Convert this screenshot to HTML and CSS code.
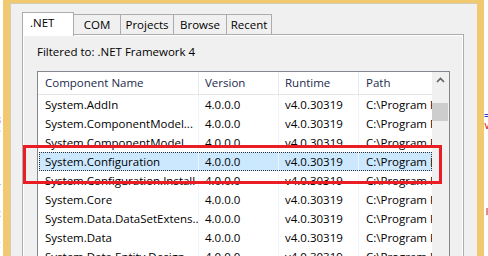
FILE: index.html
```html
<!DOCTYPE html>
<html>
<head>
<meta charset="utf-8">
<link rel="stylesheet" href="styles.css">
</head>
<body>
<div class="screen">
  <div class="gutter gutter-left">
    <span class="frag red" style="top:117px">8</span>
    <span class="frag blue" style="top:126px">s</span>
    <span class="frag blue" style="top:178px">i</span>
    <span class="frag blue" style="top:210px">c</span>
    <span class="frag red" style="top:241px">t</span>
  </div>
  <div class="window">
    <div class="window-inner">
      <div class="tabs">
        <div class="tabstrip">
          <div class="tab active w-net">.NET</div>
          <div class="tab w-com">COM</div>
          <div class="tab w-projects">Projects</div>
          <div class="tab w-browse">Browse</div>
          <div class="tab w-recent">Recent</div>
        </div>
        <div class="page">
          <div class="filter">Filtered to: .NET Framework 4</div>
          <div class="listview">
            <div class="lv-main">
              <div class="lv-header">
                <div class="cell c1">Component Name</div>
                <div class="cell c2">Version</div>
                <div class="cell c3">Runtime</div>
                <div class="cell c4">Path</div>
              </div>
              <div class="lv-rows">
                <div class="row"><div class="cell c1">System.AddIn</div><div class="cell c2">4.0.0.0</div><div class="cell c3">v4.0.30319</div><div class="cell c4">C:\Program Files</div></div>
                <div class="row"><div class="cell c1">System.ComponentModel...</div><div class="cell c2">4.0.0.0</div><div class="cell c3">v4.0.30319</div><div class="cell c4">C:\Program Files</div></div>
                <div class="row"><div class="cell c1">System.ComponentModel...</div><div class="cell c2">4.0.0.0</div><div class="cell c3">v4.0.30319</div><div class="cell c4">C:\Program Files</div></div>
                <div class="row selected"><div class="cell c1">System.Configuration</div><div class="cell c2">4.0.0.0</div><div class="cell c3">v4.0.30319</div><div class="cell c4">C:\Program Files</div></div>
                <div class="row"><div class="cell c1">System.Configuration.Install</div><div class="cell c2">4.0.0.0</div><div class="cell c3">v4.0.30319</div><div class="cell c4">C:\Program Files</div></div>
                <div class="row"><div class="cell c1">System.Core</div><div class="cell c2">4.0.0.0</div><div class="cell c3">v4.0.30319</div><div class="cell c4">C:\Program Files</div></div>
                <div class="row"><div class="cell c1">System.Data.DataSetExtens...</div><div class="cell c2">4.0.0.0</div><div class="cell c3">v4.0.30319</div><div class="cell c4">C:\Program Files</div></div>
                <div class="row"><div class="cell c1">System.Data</div><div class="cell c2">4.0.0.0</div><div class="cell c3">v4.0.30319</div><div class="cell c4">C:\Program Files</div></div>
                <div class="row"><div class="cell c1">System.Data.Entity.Design</div><div class="cell c2">4.0.0.0</div><div class="cell c3">v4.0.30319</div><div class="cell c4">C:\Program Files</div></div>
              </div>
            </div>
            <div class="scrollbar">
              <div class="sb-up">
                <svg width="17" height="17" viewBox="0 0 17 17"><path d="M5 10 L8.5 6.5 L12 10" fill="none" stroke="#606060" stroke-width="1.6"/></svg>
              </div>
              <div class="sb-thumb"></div>
            </div>
          </div>
        </div>
      </div>
    </div>
  </div>
  <div class="gutter gutter-right">
    <span class="frag-r blue" style="top:112px">=</span>
    <span class="frag-r red" style="top:122px">v</span>
    <span class="frag-r red" style="top:208px">T</span>
  </div>
</div>
<div class="highlight"></div>
</body>
</html>
```

FILE: styles.css
```css
html, body {
  margin: 0;
  padding: 0;
  background: #ffffff;
  overflow: hidden;
}

body {
  width: 488px;
  height: 256px;
  position: relative;
  font-family: "Open Sans", "Noto Sans", sans-serif;
  font-size: 11.5px;
  color: #000;
}

.screen {
  display: flex;
  height: 256px;
  overflow: hidden;
}

.gutter {
  position: relative;
  overflow: hidden;
  background: #fff;
  flex: none;
}

.gutter-left { width: 3px; }
.gutter-right { width: 4px; }

.frag, .frag-r {
  position: absolute;
  font-family: "DejaVu Sans Mono", monospace;
  font-size: 10px;
  line-height: 8px;
  height: 8px;
  overflow: hidden;
}
.frag { left: -5px; }
.frag-r { left: 0; }
.red { color: #d01010; }
.blue { color: #1a3fe0; }

.window {
  width: 467px;
  flex: none;
  border-left: 7px solid #f0c970;
  border-right: 7px solid #f0c970;
  border-top: 3px solid #f0c970;
  background: #f0f0f0;
}

.window-inner {
  height: 100%;
  box-sizing: border-box;
  border-left: 1px solid #d6cdb6;
  border-top: 1px solid #d6cdb6;
  padding: 8px 0 0 11px;
}

.tabs {
  width: 442px;
}

.tabstrip {
  display: flex;
  align-items: flex-end;
  height: 22px;
}

.tab {
  box-sizing: border-box;
  height: 20px;
  border: 1px solid #acacac;
  border-bottom: none;
  background: #f0f0f0;
  line-height: 19px;
  text-align: center;
  margin-left: -1px;
  color: #000;
}

.tab.active {
  height: 24px;
  margin-left: 0;
  margin-bottom: -2px;
  background: #ffffff;
  position: relative;
  z-index: 1;
  line-height: 20px;
  text-align: left;
  padding-left: 7px;
}

.w-net { width: 52px; }
.w-com { width: 48px; }
.w-projects { width: 54px; }
.w-browse { width: 54px; }
.w-recent { width: 46px; }

.page {
  box-sizing: border-box;
  height: 240px;
  border: 1px solid #acacac;
  box-shadow: inset 1px 1px 0 #ffffff, inset -1px 0 0 #ffffff;
  background: #f0f0f0;
  padding: 9px 13px 0 14px;
}

.filter {
  line-height: 16px;
  height: 16px;
  color: #000;
}

.listview {
  margin-top: 11px;
  display: flex;
  border: 1px solid #828790;
  background: #fff;
  height: 200px;
}

.lv-main {
  flex: 1;
  overflow: hidden;
  min-width: 0;
}

.lv-header {
  display: flex;
  height: 23px;
  box-sizing: border-box;
  border-bottom: 1px solid #e5e5e5;
  line-height: 22px;
  color: #1c2a4e;
}

.lv-header .cell {
  border-right: 1px solid #e2e9f3;
}

.row {
  display: flex;
  height: 19px;
  line-height: 19px;
  box-sizing: border-box;
}

.row .cell {
  border-right: 1px solid #f0f4fa;
}

.cell {
  box-sizing: border-box;
  white-space: nowrap;
  overflow: hidden;
  padding-left: 6px;
  flex: none;
}

.c1 { width: 161px; padding-left: 7px; }
.c2 { width: 80px; }
.c3 { width: 80px; }
.c4 { flex: 1; border-right: none !important; padding-left: 7px; }

.row.selected {
  background: #cce8ff;
  outline: 1px dotted #303030;
  outline-offset: -1px;
  margin-left: 1px;
}
.row.selected .c1 { width: 160px; padding-left: 6px; }

.scrollbar {
  width: 17px;
  flex: none;
  background: #f0f0f0;
}

.sb-up {
  height: 17px;
}
.sb-up svg { display: block; }

.sb-thumb {
  margin-top: 14px;
  height: 18px;
  width: 16px;
  background: #cdcdcd;
}

.highlight {
  position: absolute;
  left: 23px;
  top: 145px;
  width: 419px;
  height: 39px;
  box-sizing: border-box;
  border: 3px solid #ea1c24;
  z-index: 5;
}
```
